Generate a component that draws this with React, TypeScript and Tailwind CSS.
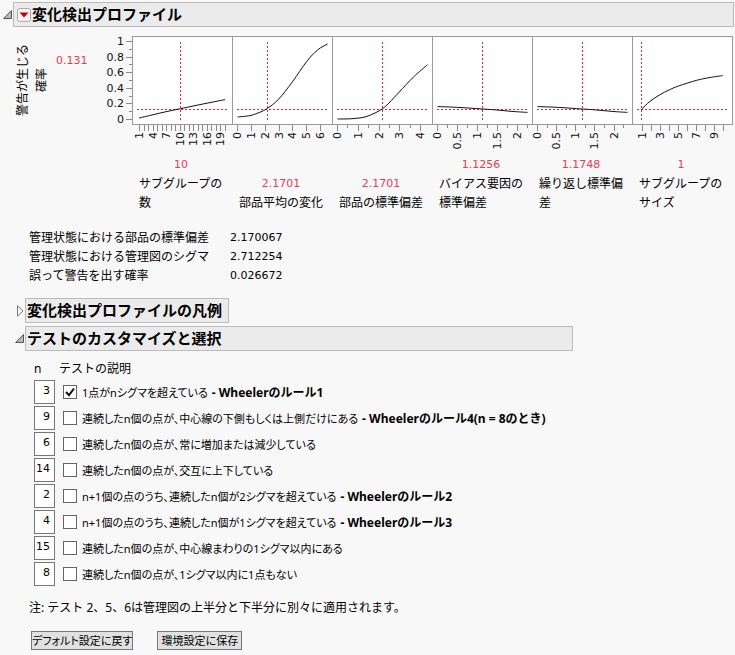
import React, { useState } from "react";

interface PanelData {
  name: string;
  value: string;
  marker: number;
  curve: [number, number][];
  ticks: { first: number; step: number; count: number; labelEvery: number; shortMinor?: boolean };
  labels: string[];
}

const FLAT_CURVE: [number, number][] = [[5.5, 70.6], [24.7, 71.3], [50.5, 73], [65, 74], [80, 75.4], [95.5, 76.4]];

const PANELS: PanelData[] = [
  {
    name: "サブグループの数",
    value: "10",
    marker: 48.5,
    curve: [[7, 82], [20, 79], [34, 75.7], [48.5, 72.7], [64, 69.4], [79, 66.4], [93, 63.6]],
    ticks: { first: 7.5, step: 4.5, count: 20, labelEvery: 3 },
    labels: ["1", "4", "7", "10", "13", "16", "19"],
  },
  {
    name: "部品平均の変化",
    value: "2.1701",
    marker: 35.5,
    curve: [[5.5, 81], [18, 79.6], [27, 76.6], [35.5, 72.3], [46.5, 63.3], [60.5, 45.7], [74.5, 25.7], [85.5, 14], [95.5, 8]],
    ticks: { first: 5.5, step: 13.85, count: 7, labelEvery: 1 },
    labels: ["0", "1", "2", "3", "4", "5", "6"],
  },
  {
    name: "部品の標準偏差",
    value: "2.1701",
    marker: 50.5,
    curve: [[5.5, 83], [20, 82.7], [33, 81], [43, 77], [50.5, 72.7], [57, 67], [67.3, 56], [81.5, 41], [95.5, 28.7]],
    ticks: { first: 5.5, step: 10.38, count: 9, labelEvery: 2, shortMinor: true },
    labels: ["0", "1", "2", "3", "4"],
  },
  {
    name: "バイアス要因の標準偏差",
    value: "1.1256",
    marker: 50.5,
    curve: FLAT_CURVE,
    ticks: { first: 5.5, step: 10, count: 10, labelEvery: 2, shortMinor: true },
    labels: ["0", "0.5", "1", "1.5", "2"],
  },
  {
    name: "繰り返し標準偏差",
    value: "1.1748",
    marker: 50.5,
    curve: FLAT_CURVE,
    ticks: { first: 5.5, step: 9.58, count: 10, labelEvery: 2, shortMinor: true },
    labels: ["0", "0.5", "1", "1.5", "2"],
  },
  {
    name: "サブグループのサイズ",
    value: "1",
    marker: 9.5,
    curve: [[9.5, 73.3], [18, 65.3], [28, 58.7], [37, 54], [46.5, 50], [64.7, 44.3], [78, 41.5], [90.7, 39.6]],
    ticks: { first: 10, step: 9, count: 10, labelEvery: 2 },
    labels: ["1", "3", "5", "7", "9"],
  },
];

const STATS = [
  ["管理状態における部品の標準偏差", "2.170067"],
  ["管理状態における管理図のシグマ", "2.712254"],
  ["誤って警告を出す確率", "0.026672"],
];

const TESTS = [
  { n: "3", text: "1点がnシグマを超えている", rule: "- Wheelerのルール1", checked: true },
  { n: "9", text: "連続したn個の点が、中心線の下側もしくは上側だけにある", rule: "- Wheelerのルール4(n = 8のとき)" },
  { n: "6", text: "連続したn個の点が、常に増加または減少している" },
  { n: "14", text: "連続したn個の点が、交互に上下している" },
  { n: "2", text: "n+1個の点のうち、連続したn個が2シグマを超えている", rule: "- Wheelerのルール2" },
  { n: "4", text: "n+1個の点のうち、連続したn個が1シグマを超えている", rule: "- Wheelerのルール3" },
  { n: "15", text: "連続したn個の点が、中心線まわりの1シグマ以内にある" },
  { n: "8", text: "連続したn個の点が、1シグマ以内に1点もない" },
];

// Catmull-Rom through the sampled points
function smoothPath(points: [number, number][]) {
  let d = `M${points[0][0]} ${points[0][1]}`;
  for (let i = 0; i < points.length - 1; i++) {
    const p0 = points[i - 1] ?? points[i];
    const p1 = points[i];
    const p2 = points[i + 1];
    const p3 = points[i + 2] ?? p2;
    d += ` C${p1[0] + (p2[0] - p0[0]) / 6} ${p1[1] + (p2[1] - p0[1]) / 6} ${p2[0] - (p3[0] - p1[0]) / 6} ${p2[1] - (p3[1] - p1[1]) / 6} ${p2[0]} ${p2[1]}`;
  }
  return d;
}

function Disclosure({ open, label }: { open: boolean; label: string }) {
  return (
    <button type="button" aria-expanded={open} aria-label={label} className="w-[10px] h-[12px] shrink-0 cursor-pointer">
      <svg width="10" height="12" viewBox="0 0 10 12" className="block">
        {open ? (
          <path d="M8.5 1.5v8H.7z" fill="#b9b9b9" stroke="#555" />
        ) : (
          <path d="M2.5.8v10.4L8 6z" fill="#fdfdfd" stroke="#777" />
        )}
      </svg>
    </button>
  );
}

function YAxis() {
  return (
    <svg width="30" height="119" className="block shrink-0 overflow-visible text-[11px] font-['DejaVu_Sans',sans-serif]">
      {Array.from({ length: 11 }, (_, i) => {
        const y = Math.round(83 - i * 7.8) + 0.5;
        return <path key={i} d={`M${i % 2 ? 27 : 24} ${y}H30`} stroke="#8c8c8c" />;
      })}
      {["0", "0.2", "0.4", "0.6", "0.8", "1"].map((label, i) => (
        <text key={label} x="22" y={87 - Math.round(i * 15.6)} textAnchor="end" fill="#111">
          {label}
        </text>
      ))}
    </svg>
  );
}

function ProfilePanel({ panel }: { panel: PanelData }) {
  const { first, step, count, labelEvery, shortMinor } = panel.ticks;
  const tickX = (i: number) => Math.floor(first + i * step) + 0.5;
  return (
    <div className="w-[100px] shrink-0 flex flex-col">
      <svg
        width="100"
        height="119"
        className="block overflow-visible text-[11px] font-['DejaVu_Sans',sans-serif]"
        role="img"
        aria-label={panel.name}
      >
        <rect x="0.5" y="0.5" width="100" height="88" fill="#fff" stroke="#999" />
        <path d="M5 73.5H95" stroke="#e8203c" strokeDasharray="2 2" />
        <path d={`M${panel.marker} 6V84`} stroke="#e8203c" strokeDasharray="2 2" />
        <path d={smoothPath(panel.curve)} fill="none" stroke="#111" />
        {Array.from({ length: count }, (_, i) => (
          <path key={i} d={`M${tickX(i)} 89v${shortMinor && i % labelEvery ? 3 : 6}`} stroke="#8c8c8c" />
        ))}
        {panel.labels.map((label, i) => (
          <text
            key={label}
            transform={`translate(${tickX(i * labelEvery) + 3} 96) rotate(-90)`}
            textAnchor="end"
            fill="#111"
          >
            {label}
          </text>
        ))}
      </svg>
      <div className="grow flex flex-col justify-end pl-[7px]">
        <div className="w-[84px] text-center text-[11px] font-['DejaVu_Sans',sans-serif] text-[#ee3a50]">{panel.value}</div>
        <div className="w-[86px]">{panel.name}</div>
      </div>
    </div>
  );
}

export default function App() {
  const [checked, setChecked] = useState(TESTS.map((t) => !!t.checked));

  const toggle = (index: number) => setChecked(checked.map((c, i) => (i === index ? !c : c)));

  return (
    <main className="min-h-screen bg-[#f8f8f8] pt-[2px] pl-[3px] pr-px pb-1 text-xs leading-[19px] text-black font-['Noto_Sans','Noto_Sans_CJK_JP',sans-serif]">
      <header className="flex items-center">
        <Disclosure open label="変化検出プロファイルを閉じる" />
        <div className="grow h-[25px] flex items-center gap-px px-[3px] border border-[#bbb] bg-[#ebebeb]">
          <button type="button" aria-label="メニュー" className="shrink-0 cursor-pointer">
            <svg width="14" height="14" viewBox="0 0 14 14" className="block">
              <rect x="0.5" y="0.5" width="13" height="13" rx="2" fill="#f3f3f3" stroke="#aaa" />
              <path d="M2.5 4.5h9L7 9.5z" fill="#c8000c" />
            </svg>
          </button>
          <h1 className="text-[15px] leading-[23px] font-bold">変化検出プロファイル</h1>
        </div>
      </header>

      {/* Profiler */}
      <div className="mt-[9px] pl-[10px] flex">
        <div className="w-[38px] h-[88px] shrink-0 rotate-180 text-center [writing-mode:vertical-rl] [text-orientation:sideways]">
          警告が生じる
          <br />
          確率
        </div>
        <div className="w-[51px] shrink-0 pl-[5px] pt-[15px] text-[11px] font-['DejaVu_Sans',sans-serif] text-[#ee3a50]">0.131</div>
        <YAxis />
        {PANELS.map((panel) => (
          <ProfilePanel key={panel.name} panel={panel} />
        ))}
      </div>

      <table className="mt-4 ml-[26px]">
        <tbody>
          {STATS.map(([name, value]) => (
            <tr key={name}>
              <th scope="row" className="w-[201px] p-0 text-left font-normal">{name}</th>
              <td className="p-0 text-[11px] leading-[19px] font-['DejaVu_Sans',sans-serif]">{value}</td>
            </tr>
          ))}
        </tbody>
      </table>

      {/* Nested outlines */}
      <div className="mt-[13px] ml-3 flex items-center">
        <Disclosure open={false} label="変化検出プロファイルの凡例を開く" />
        <h2 className="w-[204px] h-[25px] px-px border border-[#bbb] bg-[#ebebeb] text-[15px] leading-[23px] font-bold whitespace-nowrap">
          変化検出プロファイルの凡例
        </h2>
      </div>
      <div className="mt-[3px] ml-3 flex items-center">
        <Disclosure open label="テストのカスタマイズと選択を閉じる" />
        <h2 className="w-[548px] h-[25px] px-px border border-[#bbb] bg-[#ebebeb] text-[15px] leading-[23px] font-bold">
          テストのカスタマイズと選択
        </h2>
      </div>

      {/* Tests */}
      <div className="mt-2 ml-[31px]">
        <div className="flex mb-[2px]">
          <span className="w-[25px]">n</span>
          <span>テストの説明</span>
        </div>
        <div className="flex flex-col gap-[2px]">
          {TESTS.map((test, i) => (
            <div key={test.text} className="flex items-center">
              <input
                type="text"
                defaultValue={test.n}
                aria-label={`テスト${i + 1}のn`}
                className="w-[21px] h-6 pr-1 pb-1 border border-[#777] bg-white text-right text-[11px] font-['DejaVu_Sans',sans-serif]"
              />
              <label className="ml-2 flex items-center cursor-pointer whitespace-nowrap">
                <span className="grid">
                  <input
                    type="checkbox"
                    checked={checked[i]}
                    onChange={() => toggle(i)}
                    className="col-start-1 row-start-1 size-[14px] appearance-none border border-[#666] bg-white"
                  />
                  {checked[i] && (
                    <svg width="14" height="14" viewBox="0 0 14 14" className="col-start-1 row-start-1 pointer-events-none">
                      <path d="M3 7l3 3.2 5-6.7" fill="none" stroke="#111" strokeWidth="2" />
                    </svg>
                  )}
                </span>
                <span className="ml-[5px] text-[11px] leading-[19px] [font-feature-settings:'palt']">{test.text}</span>
                {test.rule && <b className="ml-1">{test.rule}</b>}
              </label>
            </div>
          ))}
        </div>
      </div>

      <p className="mt-3 ml-[26px]">注: テスト 2、5、6は管理図の上半分と下半分に別々に適用されます。</p>

      <div className="mt-[14px] ml-7 flex gap-6 text-[11px] [font-feature-settings:'palt']">
        <button type="button" className="min-w-[85px] h-[19px] border border-[#777] bg-[#e1e1e1] leading-[17px] whitespace-nowrap cursor-pointer">
          デフォルト設定に戻す
        </button>
        <button type="button" className="min-w-[85px] h-[19px] border border-[#777] bg-[#e1e1e1] leading-[17px] whitespace-nowrap cursor-pointer">
          環境設定に保存
        </button>
      </div>
    </main>
  );
}
